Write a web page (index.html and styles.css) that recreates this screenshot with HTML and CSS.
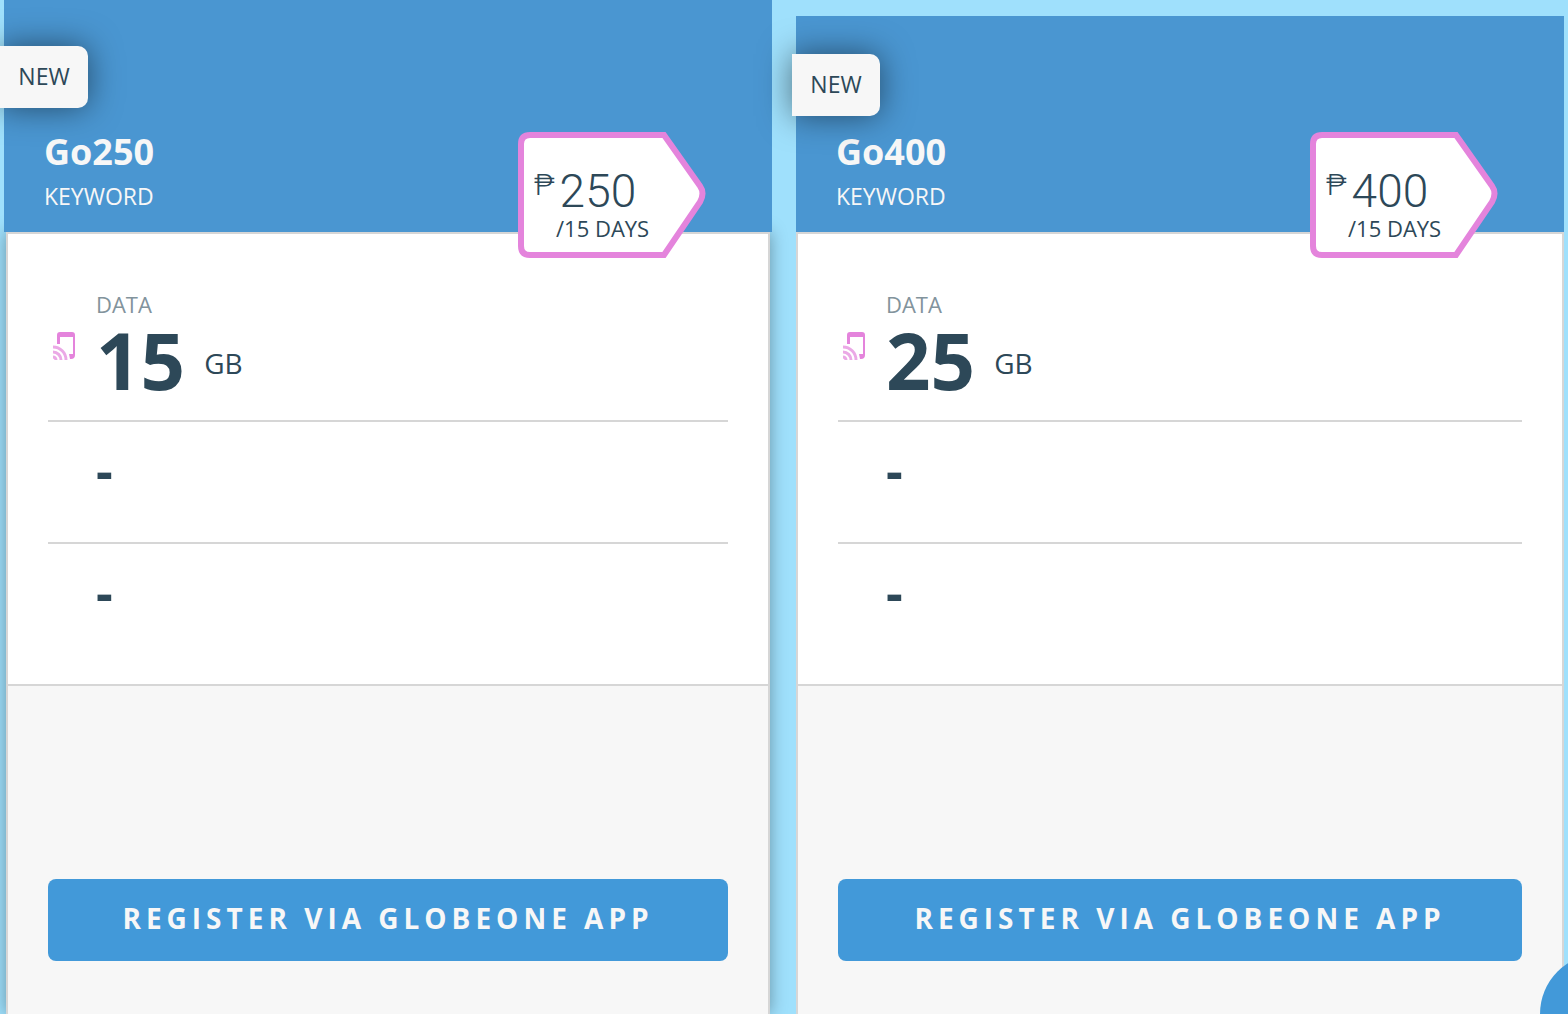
FILE: index.html
```
<!DOCTYPE html>
<html lang="en">
<head>
    <meta charset="UTF-8">
    <meta name="viewport" content="width=device-width, initial-scale=1.0">
    <title>Go Promos</title>
    <link rel="stylesheet" href="styles.css">
</head>
<body>
    <!-- Phone icon shared by the cards -->
    <svg width="0" height="0" class="sprite">
        <symbol id="icon-data" viewBox="0 0 24 30">
            <path class="phone" d="M5 13V4Q5 1 8 1H20Q23 1 23 4V24Q23 28 19 28H18L17 23H21V6H8V13Z"/>
            <path class="wave" d="M1 16A13 13 0 0 1 14 29M1 21A8 8 0 0 1 9 29M1 26A3 3 0 0 1 4 29"/>
        </symbol>
        <symbol id="tag" viewBox="0 0 188 126">
            <path d="M12 3H146L182 54Q187 61 182 70L146 123H12Q3 123 3 114V12Q3 3 12 3Z"/>
        </symbol>
    </svg>

    <main class="promos">
        <article class="card active">
            <header class="card-header">
                <span class="badge">NEW</span>
                <h2>Go250</h2>
                <p class="keyword">KEYWORD</p>
                <div class="price">
                    <svg class="price-shape"><use href="#tag"/></svg>
                    <p class="amount"><span class="peso">₱</span>250</p>
                    <p class="validity">/15 DAYS</p>
                </div>
            </header>
            <div class="card-body">
                <div class="row data-row">
                    <svg class="icon"><use href="#icon-data"/></svg>
                    <div>
                        <p class="label">DATA</p>
                        <p class="value">15<span class="unit">GB</span></p>
                    </div>
                </div>
                <div class="row"><p class="empty">-</p></div>
                <div class="row last"><p class="empty">-</p></div>
                <div class="card-footer">
                    <button type="button">REGISTER VIA GLOBEONE APP</button>
                </div>
            </div>
        </article>

        <article class="card">
            <header class="card-header">
                <span class="badge">NEW</span>
                <h2>Go400</h2>
                <p class="keyword">KEYWORD</p>
                <div class="price">
                    <svg class="price-shape"><use href="#tag"/></svg>
                    <p class="amount"><span class="peso">₱</span>400</p>
                    <p class="validity">/15 DAYS</p>
                </div>
            </header>
            <div class="card-body">
                <div class="row data-row">
                    <svg class="icon"><use href="#icon-data"/></svg>
                    <div>
                        <p class="label">DATA</p>
                        <p class="value">25<span class="unit">GB</span></p>
                    </div>
                </div>
                <div class="row"><p class="empty">-</p></div>
                <div class="row last"><p class="empty">-</p></div>
                <div class="card-footer">
                    <button type="button">REGISTER VIA GLOBEONE APP</button>
                </div>
            </div>
        </article>
    </main>

    <!-- Floating chat bubble -->
    <button type="button" class="chat" aria-label="Chat"></button>
</body>
</html>
```

FILE: styles.css
```
/* General Page Styling */
* {
    box-sizing: border-box;
}

body {
    margin: 0;
    background-color: #9fe0fc;
    color: #2d4858;
    font-family: "Open Sans", "Noto Sans", sans-serif;
    overflow: hidden;
}

h2, p {
    margin: 0;
}

.sprite {
    position: absolute;
}

.promos {
    display: grid;
    grid-template-columns: 1fr 1fr;
    gap: 24px;
    padding: 0 4px;
    min-height: 100vh;
}

/* Cards */
.card {
    display: flex;
    flex-direction: column;
    padding-top: 16px;
}

.card.active {
    padding-top: 0;
}

.card-header {
    position: relative;
    display: flex;
    flex-direction: column;
    justify-content: flex-end;
    height: 216px;
    padding: 0 40px 20px;
    background-color: #4a96d1;
    color: #f7f7f7;
    z-index: 1;
}

.active .card-header {
    height: 232px;
}

.card-header h2 {
    margin-bottom: 4px;
    font-size: 36px;
    line-height: 48px;
    font-weight: 700;
}

.keyword {
    font-size: 23px;
    line-height: 32px;
}

.badge {
    position: absolute;
    top: 38px;
    left: -4px;
    width: 88px;
    padding: 14px 0 16px;
    border-radius: 0 10px 10px 0;
    background-color: #f7f7f7;
    box-shadow: 0 0 32px rgba(0, 0, 0, 0.5);
    color: #2d4858;
    font-size: 23px;
    line-height: 32px;
    text-align: center;
}

.active .badge {
    top: 46px;
}

/* Price tag hangs over the header edge */
.price {
    position: absolute;
    right: 66px;
    bottom: -26px;
    width: 188px;
    height: 126px;
    padding: 35px 0 0 16px;
    color: #2d4858;
}

.price-shape {
    position: absolute;
    top: 0;
    left: 0;
    width: 188px;
    height: 126px;
    fill: #fff;
    stroke: #e484dc;
    stroke-width: 6px;
    z-index: -1;
}

.amount {
    display: flex;
    gap: 5px;
    font-family: Roboto, sans-serif;
    font-size: 46px;
    font-weight: 300;
    line-height: 48px;
}

.peso {
    font-size: 30px;
    line-height: 36px;
}

.validity {
    padding-left: 22px;
    font-size: 22px;
    line-height: 26px;
}

/* Card body */
.card-body {
    flex: 1;
    display: flex;
    flex-direction: column;
    border: 2px solid #d6d6d6;
    border-bottom: none;
    background-color: #fff;
}

.active .card-body {
    margin: 0 2px;
    box-shadow: 0 0 16px rgba(0, 0, 0, 0.35);
}

.row {
    margin: 0 40px;
    padding: 8px 0 32px 48px;
    border-bottom: 2px solid #d6d6d6;
}

.data-row {
    display: flex;
    padding: 54px 0 20px 4px;
}

.row.last {
    padding-bottom: 52px;
    border-bottom: none;
}

.icon {
    width: 24px;
    height: 30px;
    margin: 43px 20px 0 0;
}

.phone {
    fill: #e484dc;
}

.wave {
    fill: none;
    stroke: #eba9e6;
    stroke-width: 3px;
}

.label {
    color: #82939c;
    font-size: 22px;
    line-height: 32px;
}

.value {
    display: flex;
    align-items: center;
    gap: 19px;
    font-size: 78px;
    font-weight: 700;
    line-height: 80px;
}

.unit {
    padding-top: 6px;
    font-size: 28px;
    font-weight: 400;
    line-height: 40px;
}

.empty {
    font-size: 52px;
    font-weight: 700;
    line-height: 80px;
}

.card-footer {
    flex: 1;
    padding: 193px 40px 53px;
    border-top: 2px solid #d6d6d6;
    background-color: #f7f7f7;
}

.card-footer button {
    width: 100%;
    padding: 19px 0 23px;
    border: none;
    border-radius: 8px;
    background-color: #4299d9;
    color: #f7f7f7;
    font-family: inherit;
    font-size: 28px;
    font-weight: 700;
    line-height: 40px;
    letter-spacing: 5px;
    cursor: pointer;
}

.chat {
    position: fixed;
    right: -92px;
    bottom: -60px;
    width: 120px;
    height: 120px;
    border: none;
    border-radius: 50%;
    background-color: #4299d9;
    z-index: 2;
}
```
